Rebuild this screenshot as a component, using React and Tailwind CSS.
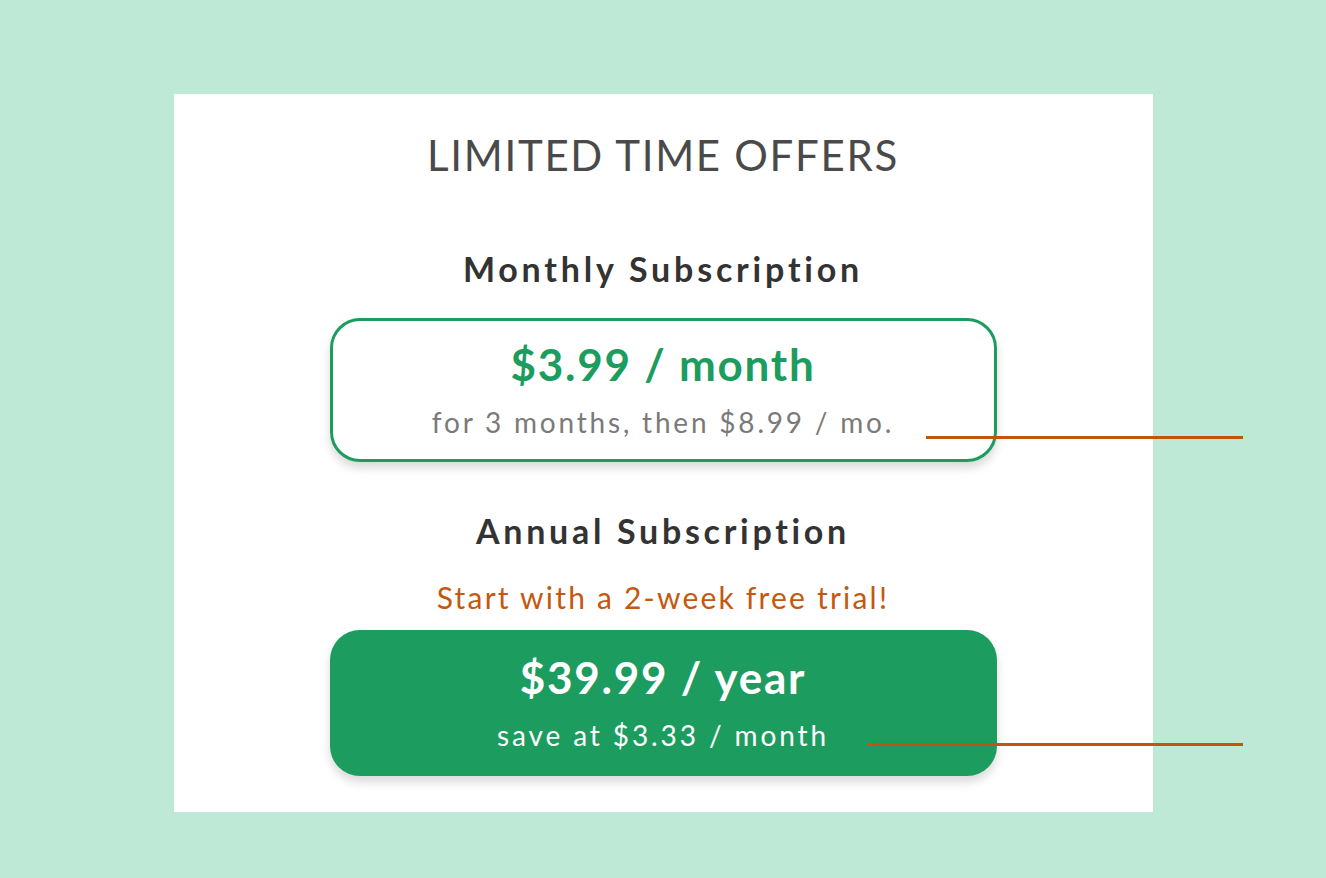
export default function App() {
  return (
    <div className="relative min-h-[878px] w-full bg-[#bee9d6] flex justify-center pt-[94px] font-['Lato','Open_Sans',sans-serif]">
      <div className="w-[979px] h-[718px] bg-white flex flex-col items-center">
        <h1 className="mt-[40px] text-[42px] leading-none font-normal tracking-[1.7px] text-[#4a4a4a]">LIMITED TIME OFFERS</h1>

        <h2 className="mt-[76px] text-[34px] leading-none font-bold tracking-[3.8px] text-[#333]">Monthly Subscription</h2>
        <div className="mt-[32px] w-[667px] h-[144px] rounded-[30px] border-[3px] border-[#1c9c5f] flex flex-col items-center pt-[21px] shadow-[0_6px_10px_rgba(0,0,0,0.15)]">
          <div className="text-[44px] leading-none font-bold tracking-[0.04em] text-[#1c9c5f]">$3.99 / month</div>
          <div className="mt-[22px] text-[28px] leading-none tracking-[2.8px] text-[#7a7a7a]">for 3 months, then $8.99 / mo.</div>
        </div>

        <h2 className="mt-[52px] text-[34px] leading-none font-bold tracking-[3.7px] text-[#333]">Annual Subscription</h2>
        <div className="mt-[34px] text-[30px] leading-none tracking-[2.2px] text-[#c4580e]">Start with a 2-week free trial!</div>
        <div className="mt-[18px] w-[667px] h-[146px] rounded-[30px] bg-[#1c9c5f] flex flex-col items-center pt-[25px] shadow-[0_6px_10px_rgba(0,0,0,0.15)]">
          <div className="text-[44px] leading-none font-bold tracking-[0.04em] text-white">$39.99 / year</div>
          <div className="mt-[22px] text-[28px] leading-none tracking-[2.9px] text-white">save at $3.33 / month</div>
        </div>
      </div>

      {/* callout lines */}
      <div className="absolute left-[926px] top-[436px] w-[317px] h-[3px] bg-[#c25508]" />
      <div className="absolute left-[866px] top-[743px] w-[377px] h-[3px] bg-[#c25508]" />
    </div>
  )
}
